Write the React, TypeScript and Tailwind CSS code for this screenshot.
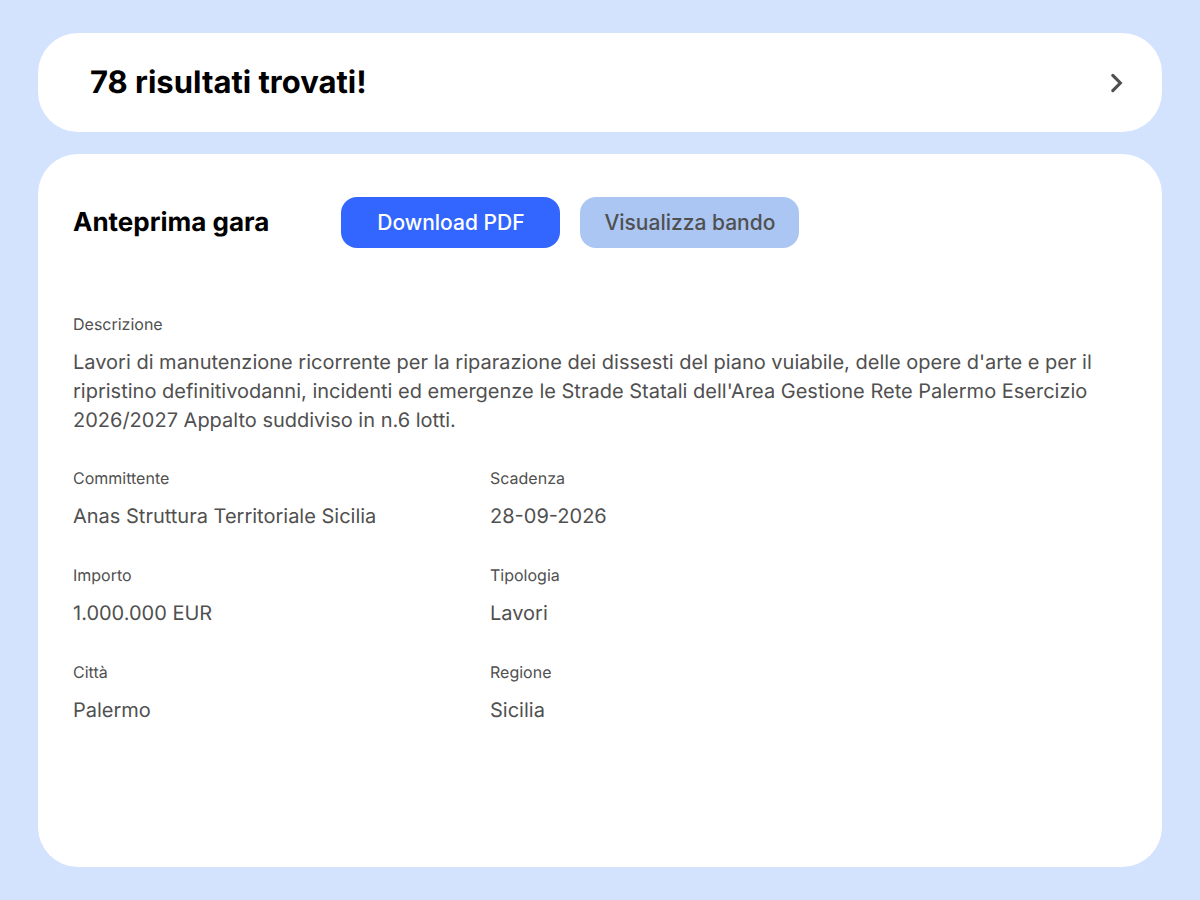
const details = [
  { label: "Committente", value: "Anas Struttura Territoriale Sicilia" },
  { label: "Scadenza", value: "28-09-2026" },
  { label: "Importo", value: "1.000.000 EUR" },
  { label: "Tipologia", value: "Lavori" },
  { label: "Città", value: "Palermo" },
  { label: "Regione", value: "Sicilia" },
];

function Field({ label, value }: { label: string; value: string }) {
  return (
    <div>
      <dt className="text-base leading-6">{label}</dt>
      <dd className="mt-3 text-xl leading-[29px]">{value}</dd>
    </div>
  );
}

export default function App() {
  return (
    <main className="flex min-h-screen flex-col gap-[22px] bg-[#d3e3fe] px-[38px] py-[33px] font-['Inter',sans-serif] text-[#505050] [text-rendering:geometricPrecision]">
      <section className="flex items-center justify-between rounded-[40px] bg-white py-7 pr-[34px] pl-[52px]">
        <h1 className="text-[31px] leading-[43px] font-bold text-black">78 risultati trovati!</h1>
        <button type="button" aria-label="Mostra risultati" className="cursor-pointer">
          <svg viewBox="0 0 24 24" className="size-6" fill="none" stroke="currentColor" strokeWidth="3.2" strokeLinecap="round">
            <path d="M8.8 4.4l7.5 7.6-7.5 7.6" />
          </svg>
        </button>
      </section>
      <section className="flex-1 rounded-[40px] bg-white px-[35px] pt-[43px] pb-12">
        <div className="flex flex-wrap items-center">
          <h2 className="mr-[72px] text-[26px] leading-9 font-bold text-black">Anteprima gara</h2>
          <div className="flex gap-5">
            <button type="button" className="h-[51px] w-[219px] cursor-pointer rounded-2xl bg-[#3366ff] text-[21px] font-medium text-white">
              Download PDF
            </button>
            <button type="button" className="h-[51px] w-[219px] cursor-pointer rounded-2xl bg-[#abc6f3] text-[21px] font-medium">
              Visualizza bando
            </button>
          </div>
        </div>
        <dl className="mt-16 flex flex-col gap-[31px]">
          <Field
            label="Descrizione"
            value="Lavori di manutenzione ricorrente per la riparazione dei dissesti del piano vuiabile, delle opere d'arte e per il ripristino definitivodanni, incidenti ed emergenze le Strade Statali dell'Area Gestione Rete Palermo Esercizio 2026/2027 Appalto suddiviso in n.6 lotti."
          />
          <div className="grid grid-cols-[417px_1fr] gap-y-8">
            {details.map((item) => (
              <Field key={item.label} {...item} />
            ))}
          </div>
        </dl>
      </section>
    </main>
  );
}
